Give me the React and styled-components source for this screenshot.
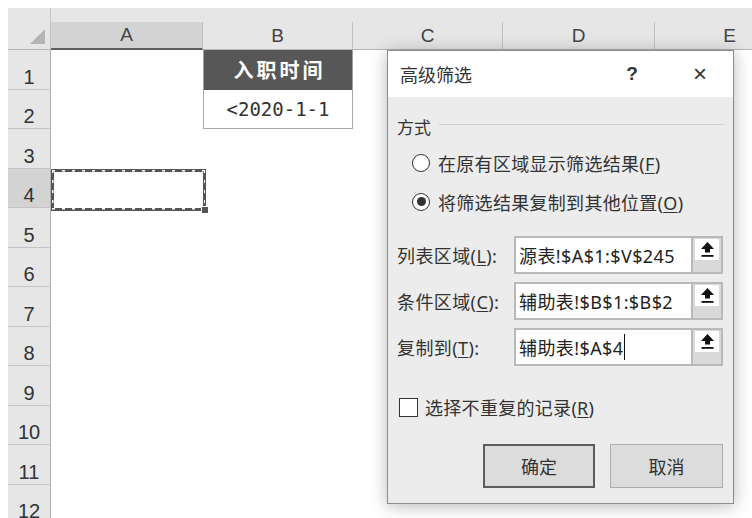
import React from 'react'
import styled, { createGlobalStyle } from 'styled-components'

const GlobalStyle = createGlobalStyle`
  html, body {
    margin: 0;
    background: #ffffff;
    overflow: hidden;
  }
  body {
    font-family: "Noto Sans", "Noto Sans CJK SC", sans-serif;
  }
`

const Page = styled.div`
  position: relative;
  width: 752px;
  height: 518px;
  padding: 8px 0 0 8px;
  box-sizing: border-box;
  overflow: hidden;
`

const Sheet = styled.div`
  display: grid;
  grid-template-columns: 43px 152px 150px 150px 152px 150px;
  grid-auto-rows: 39.5px;
  grid-template-rows: 42px;
  background: #fff;
`

const Corner = styled.div`
  background: #e6e6e6;
  border-right: 1px solid #c4c4c4;
  border-bottom: 1px solid #b4b4b4;
  box-sizing: border-box;
  position: relative;
  &::after {
    content: "";
    position: absolute;
    right: 5px;
    bottom: 5px;
    border-style: solid;
    border-width: 0 0 15px 15px;
    border-color: transparent transparent #b5b5b5 transparent;
  }
`

const ColHead = styled.div`
  background: #e6e6e6;
  display: flex;
  flex-direction: column;
  justify-content: flex-end;
`

const ColLabel = styled.div`
  height: 28px;
  box-sizing: border-box;
  display: flex;
  align-items: center;
  justify-content: center;
  font-family: "Liberation Sans", "Noto Sans", sans-serif;
  font-size: 19px;
  color: #444;
  background: ${p => (p.$active ? '#d3d3d3' : '#e6e6e6')};
  border-right: 1px solid #c2c2c2;
  border-bottom: ${p => (p.$active ? '2px solid #5e5e5e' : '1px solid #b4b4b4')};
`

const RowHead = styled.div`
  background: ${p => (p.$active ? '#d3d3d3' : '#e6e6e6')};
  border-right: 1px solid #b0b0b0;
  border-bottom: 1px solid #c4c4c4;
  box-sizing: border-box;
  display: flex;
  align-items: flex-end;
  justify-content: center;
  font-family: "Liberation Sans", "Noto Sans", sans-serif;
  font-size: 20px;
  color: #333;
  overflow: hidden;
`

const Cell = styled.div`
  background: #fff;
  box-sizing: border-box;
  position: relative;
`

const HeadCell = styled(Cell)`
  background: #575757;
  color: #fff;
  font-family: "Noto Sans CJK SC", sans-serif;
  font-weight: 700;
  font-size: 20px;
  letter-spacing: 3px;
  padding-left: 3px;
  display: flex;
  align-items: center;
  justify-content: center;
  border-left: 1px solid #a0a0a0;
  border-right: 1px solid #a0a0a0;
`

const DataCell = styled(Cell)`
  border-left: 1px solid #a8a8a8;
  border-right: 1px solid #a8a8a8;
  border-bottom: 1px solid #a8a8a8;
  display: flex;
  align-items: center;
  justify-content: center;
  font-family: "DejaVu Sans Mono", monospace;
  font-size: 19px;
  color: #333;
`

const dashH = 'repeating-linear-gradient(90deg, #fff 0 3px, transparent 3px 10px)'
const dashV = 'repeating-linear-gradient(180deg, #fff 0 3px, transparent 3px 10px)'

const CopyCell = styled(Cell)`
  &::before {
    content: "";
    position: absolute;
    left: 0;
    top: 0;
    width: 155px;
    height: 42px;
    box-sizing: border-box;
    border: 3px solid #555;
    z-index: 1;
  }
  &::after {
    content: "";
    position: absolute;
    left: 1px;
    top: 1px;
    width: 153px;
    height: 40px;
    background:
      ${dashH} left top / 100% 1.5px no-repeat,
      ${dashH} left bottom / 100% 1.5px no-repeat,
      ${dashV} left top / 1.5px 100% no-repeat,
      ${dashV} right top / 1.5px 100% no-repeat;
    z-index: 2;
  }
`

const Handle = styled.span`
  position: absolute;
  left: 150px;
  top: 37px;
  width: 6px;
  height: 6px;
  background: #555;
  border: 1px solid #fff;
  z-index: 3;
`

const Dialog = styled.div`
  position: absolute;
  left: 387px;
  top: 50px;
  width: 347px;
  height: 454px;
  box-sizing: border-box;
  border: 1px solid #8c8c8c;
  background: #ececec;
  box-shadow: 0 2px 16px rgba(0, 0, 0, 0.28);
  display: flex;
  flex-direction: column;
  color: #333;
`

const TitleBar = styled.div`
  height: 46px;
  background: #fff;
  display: flex;
  align-items: center;
  padding: 0 0 0 12px;
  font-size: 18px;
  color: #333;
`

const Title = styled.div`
  flex: 1;
`

const TitleBtn = styled.div`
  width: ${p => p.$w}px;
  text-align: center;
  font-family: "Liberation Sans", sans-serif;
  font-size: ${p => p.$size}px;
  font-weight: ${p => (p.$bold ? 700 : 400)};
  color: #333;
`

const Body = styled.div`
  flex: 1;
  padding: 16px 9px 0 9px;
  display: flex;
  flex-direction: column;
`

const GroupHead = styled.div`
  display: flex;
  align-items: center;
  gap: 8px;
  font-size: 17px;
  height: 26px;
  &::after {
    content: "";
    flex: 1;
    height: 1px;
    background: #d2d2d2;
    margin-top: -4px;
  }
`

const OptionRow = styled.label`
  display: flex;
  align-items: center;
  gap: 8px;
  height: 39px;
  padding-left: 15px;
  font-size: 18px;
  letter-spacing: 0.3px;
  color: #333;
`

const Radio = styled.span`
  width: 18px;
  height: 18px;
  border-radius: 50%;
  border: 1.5px solid #333;
  background: #fff;
  box-sizing: border-box;
  display: flex;
  align-items: center;
  justify-content: center;
  &::after {
    content: "";
    width: 9px;
    height: 9px;
    border-radius: 50%;
    background: ${p => (p.$on ? '#333' : 'transparent')};
  }
`

const Underline = styled.span`
  text-decoration: underline;
  text-underline-offset: 2px;
`

const Fields = styled.div`
  display: flex;
  flex-direction: column;
  gap: 8px;
  margin-top: 15px;
`

const FieldRow = styled.div`
  display: flex;
  align-items: center;
  height: 38px;
`

const FieldLabel = styled.div`
  width: 117px;
  font-size: 18px;
  letter-spacing: 0.4px;
  color: #333;
  white-space: nowrap;
`

const InputBox = styled.div`
  width: 209px;
  height: 38px;
  box-sizing: border-box;
  border: 2px solid #b9b9b9;
  background: #fff;
  display: flex;
`

const InputText = styled.div`
  flex: 1;
  display: flex;
  align-items: center;
  padding-left: 3px;
  font-size: 18px;
  letter-spacing: 0.4px;
  color: #222;
  white-space: nowrap;
  overflow: hidden;
`

const Caret = styled.span`
  display: inline-block;
  width: 1px;
  height: 26px;
  background: #111;
  margin-left: 1px;
`

const PickBtn = styled.div`
  width: 30px;
  border-left: 2px solid #b9b9b9;
  background: #d9d9d9;
  padding: 1px 2px 0 2px;
  box-sizing: border-box;
`

const PickFace = styled.div`
  height: 21px;
  background: #fff;
  display: flex;
  align-items: center;
  justify-content: center;
`

const CheckRow = styled.label`
  display: flex;
  align-items: center;
  gap: 7px;
  margin-top: 28px;
  padding-left: 2px;
  font-size: 18px;
  letter-spacing: 0.3px;
  color: #333;
`

const CheckBox = styled.span`
  width: 19px;
  height: 19px;
  box-sizing: border-box;
  border: 1.5px solid #333;
  background: #fff;
`

const Buttons = styled.div`
  display: flex;
  justify-content: flex-end;
  gap: 15px;
  margin-top: 24px;
  padding-right: 1px;
`

const Button = styled.div`
  width: ${p => p.$w}px;
  height: 44px;
  box-sizing: border-box;
  display: flex;
  align-items: center;
  justify-content: center;
  background: #dcdcdc;
  border: ${p => (p.$primary ? '2px solid #5c5c5c' : '1px solid #adadad')};
  font-size: 18px;
  color: #333;
`

const UpArrow = () => (
  <svg width="15" height="17" viewBox="0 0 15 17">
    <path d="M7.5 1 L14 8 L10 8 L10 11.5 L5 11.5 L5 8 L1 8 Z" fill="#111" />
    <rect x="1.5" y="14" width="12" height="1.8" fill="#111" />
  </svg>
)

const cols = ['A', 'B', 'C', 'D', 'E']
const rows = [1, 2, 3, 4, 5, 6, 7, 8, 9, 10, 11, 12]

const fields = [
  { label: '列表区域', key: 'L', value: '源表!$A$1:$V$245' },
  { label: '条件区域', key: 'C', value: '辅助表!$B$1:$B$2' },
  { label: '复制到', key: 'T', value: '辅助表!$A$4', caret: true },
]

function renderCell(row, col) {
  const k = `${row}-${col}`
  if (row === 1 && col === 'B') return <HeadCell key={k}>入职时间</HeadCell>
  if (row === 2 && col === 'B') return <DataCell key={k}>&lt;2020-1-1</DataCell>
  if (row === 4 && col === 'A') return <CopyCell key={k}><Handle /></CopyCell>
  return <Cell key={k} />
}

export default function App() {
  return (
    <Page>
      <GlobalStyle />
      <Sheet>
        <Corner />
        {cols.map(c => (
          <ColHead key={c}>
            <ColLabel $active={c === 'A'}>{c}</ColLabel>
          </ColHead>
        ))}
        {rows.map(r => (
          <React.Fragment key={r}>
            <RowHead $active={r === 4}>{r}</RowHead>
            {cols.map(c => renderCell(r, c))}
          </React.Fragment>
        ))}
      </Sheet>

      <Dialog>
        <TitleBar>
          <Title>高级筛选</Title>
          <TitleBtn $w={70} $size={19} $bold>?</TitleBtn>
          <TitleBtn $w={66} $size={24}>×</TitleBtn>
        </TitleBar>
        <Body>
          <GroupHead>方式</GroupHead>
          <OptionRow style={{ marginTop: 4 }}>
            <Radio />
            <span>在原有区域显示筛选结果(<Underline>F</Underline>)</span>
          </OptionRow>
          <OptionRow>
            <Radio $on />
            <span>将筛选结果复制到其他位置(<Underline>O</Underline>)</span>
          </OptionRow>
          <Fields>
            {fields.map(f => (
              <FieldRow key={f.key}>
                <FieldLabel>{f.label}(<Underline>{f.key}</Underline>):</FieldLabel>
                <InputBox>
                  <InputText>
                    {f.value}
                    {f.caret && <Caret />}
                  </InputText>
                  <PickBtn>
                    <PickFace><UpArrow /></PickFace>
                  </PickBtn>
                </InputBox>
              </FieldRow>
            ))}
          </Fields>
          <CheckRow>
            <CheckBox />
            <span>选择不重复的记录(<Underline>R</Underline>)</span>
          </CheckRow>
          <Buttons>
            <Button $primary $w={112}>确定</Button>
            <Button $w={113}>取消</Button>
          </Buttons>
        </Body>
      </Dialog>
    </Page>
  )
}
